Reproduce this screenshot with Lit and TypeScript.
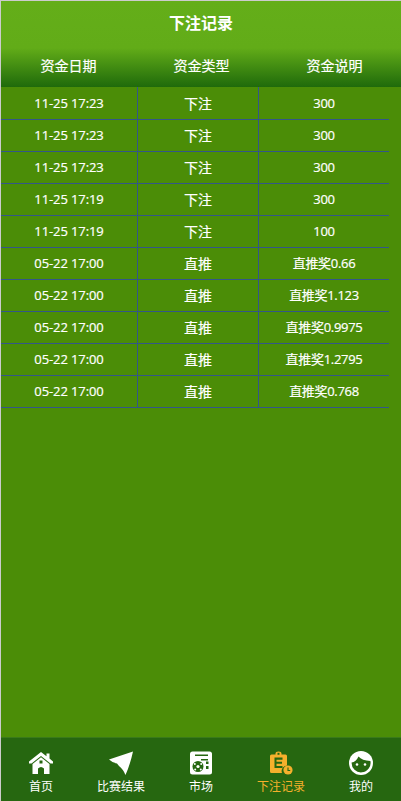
import { LitElement, html, css } from "lit";
import { customElement } from "lit/decorators.js";

const rows = [
  ["11-25 17:23", "下注", "300"],
  ["11-25 17:23", "下注", "300"],
  ["11-25 17:23", "下注", "300"],
  ["11-25 17:19", "下注", "300"],
  ["11-25 17:19", "下注", "100"],
  ["05-22 17:00", "直推", "直推奖0.66"],
  ["05-22 17:00", "直推", "直推奖1.123"],
  ["05-22 17:00", "直推", "直推奖0.9975"],
  ["05-22 17:00", "直推", "直推奖1.2795"],
  ["05-22 17:00", "直推", "直推奖0.768"],
];

const NAV = "#266710";

@customElement("app-root")
export class AppRoot extends LitElement {
  static styles = css`
    :host { display: block; }
    .page {
      box-sizing: border-box; width: 401px; height: 801px;
      border-top: 1px solid #ccc; border-left: 1px solid #ccc;
      background: #4b8d07; display: flex; flex-direction: column;
      font-family: "Open Sans", "Noto Sans CJK SC", sans-serif;
      color: #fff; overflow: hidden;
    }
    .head { height: 86px; background: linear-gradient(#64ae19 0, #62ac18 47px, #1f6a0b 86px); flex: none; }
    .title { height: 46px; box-sizing: border-box; padding-bottom: 4px; display: flex; align-items: center; justify-content: center; font-size: 16px; font-weight: 700; }
    .cols { height: 40px; box-sizing: border-box; padding: 0 0 4px 1px; display: grid; grid-template-columns: 133px 133px 133px; font-size: 14px; -webkit-text-stroke: 0.2px #fff; }
    .cols div { display: flex; align-items: center; justify-content: center; }
    .table { flex: 1; width: 388px; }
    .row { display: grid; grid-template-columns: 136px 122px 130px; height: 32px; box-sizing: border-box; border-bottom: 1px solid #33568a; font-size: 13px; -webkit-text-stroke: 0.2px #fff; }
    .row:first-child { height: 33px; }
    .row div { display: flex; align-items: center; justify-content: center; box-sizing: border-box; padding-bottom: 2px; }
    .row:first-child div { padding-bottom: 1px; }
    .date { letter-spacing: -0.1px; }
    .m { border-left: 1px solid #33568a; border-right: 1px solid #33568a; font-size: 14px; }
    .note { letter-spacing: -0.3px; }
    .nav { flex: none; height: 64px; background: #266710; border-top: 1px solid #3a7a1a; box-sizing: border-box; display: grid; grid-template-columns: repeat(5, 80px); font-size: 12px; }
    .tab { display: flex; flex-direction: column; align-items: center; padding-top: 13px; }
    .tab svg { width: 24px; height: 24px; display: block; }
    .tab span { line-height: 16px; margin-top: 4px; }
    .on { color: #f5b02c; }
  `;
  render() {
    return html`<div class="page">
      <div class="head">
        <div class="title">下注记录</div>
        <div class="cols"><div>资金日期</div><div>资金类型</div><div>资金说明</div></div>
      </div>
      <div class="table">
        ${rows.map((r) => html`<div class="row"><div class="date">${r[0]}</div><div class="m">${r[1]}</div><div class="note">${r[2]}</div></div>`)}
      </div>
      <div class="nav">
        <div class="tab"><svg viewBox="0 0 24 24"><path fill="#fff" d="M12 1 L17.5 5.2 V2.5 H20.5 V7.5 L24 10.5 V12.5 H21.5 L12 5 L2.5 12.5 H0 V10.5 Z"/><path fill="#fff" fill-rule="evenodd" d="M3.5 13 L12 6.2 L20.5 13 V23 H15 V17.5 Q12 14.5 9 17.5 V23 H3.5 Z M10.5 9.5 h3 v3 h-3 Z"/></svg><span>首页</span></div>
        <div class="tab"><svg viewBox="0 0 24 24"><path fill="#fff" d="M24 0.5 L0 8.5 Q3 11.5 8 12.5 L10 15 Q14 18 16.5 24 Q21 14 24 0.5 Z"/></svg><span>比赛结果</span></div>
        <div class="tab"><svg viewBox="0 0 24 24"><rect x="1" y="0.5" width="22" height="23" rx="2.5" fill="#fff"/><path d="M6 3.5h13v1.5H6z M12 8h7v1.5h-7z" fill="${NAV}"/><path d="M17 10.5h2.5v2.5H17z M17 15h2.5v3H17z" fill="${NAV}"/><circle cx="9" cy="15.5" r="5.5" fill="${NAV}"/><circle cx="9" cy="15.5" r="1.6" fill="#fff"/><circle cx="5.8" cy="13" r="1" fill="#fff"/><circle cx="12.2" cy="13" r="1" fill="#fff"/><circle cx="6.2" cy="18.4" r="1" fill="#fff"/><circle cx="11.8" cy="18.4" r="1" fill="#fff"/></svg><span>市场</span></div>
        <div class="tab on"><svg viewBox="0 0 24 24"><path fill="#f5b02c" d="M1 5 Q1 3.5 2.5 3.5 H6.5 V2.5 Q6.5 0.5 9.5 0.5 Q12.5 0.5 12.5 2.5 V3.5 H16.5 Q18 3.5 18 5 V14.5 A 5.5 5.5 0 0 0 13 22 H2.5 Q1 22 1 20.5 Z"/><path fill="${NAV}" d="M5.5 6.5h8v2.2H7.5v2h5.5v2H7.5v2.2h6v2.2h-8z"/><path fill="${NAV}" d="M8.5 1.8h2v2h-2z"/><circle cx="19" cy="19" r="4.6" fill="#f5b02c"/><path d="M19 16.5v3h2.2" stroke="${NAV}" stroke-width="1.1" fill="none"/></svg><span>下注记录</span></div>
        <div class="tab"><svg viewBox="0 0 24 24"><circle cx="12" cy="12" r="12" fill="#fff"/><path fill="${NAV}" d="M2.6 11.5 Q7 11 9.5 5.5 Q13 9.5 21.4 10 A 9.5 9.5 0 1 1 2.6 11.5 Z"/><circle cx="8" cy="13.5" r="1.3" fill="#fff"/><circle cx="16" cy="13.5" r="1.3" fill="#fff"/></svg><span>我的</span></div>
      </div>
    </div>`;
  }
}
